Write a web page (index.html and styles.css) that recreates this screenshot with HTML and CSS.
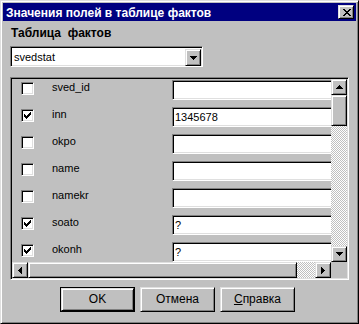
FILE: index.html
```html
<!DOCTYPE html>
<html lang="ru">
<head>
<meta charset="utf-8">
<title>Значения полей в таблице фактов</title>
<link rel="stylesheet" href="styles.css">
</head>
<body>
<div class="window">
  <div class="titlebar">
    <span class="title">Значения полей в таблице фактов</span>
    <span class="close raised">
      <svg width="8" height="7" viewBox="0 0 8 7" shape-rendering="crispEdges"><path d="M0 0h2v1h-2zM6 0h2v1h-2zM1 1h2v1h-2zM5 1h2v1h-2zM2 2h4v1h-4zM3 3h2v1h-2zM2 4h4v1h-4zM1 5h2v1h-2zM5 5h2v1h-2zM0 6h2v1h-2zM6 6h2v1h-2z" fill="#000"/></svg>
    </span>
  </div>
  <div class="content">
    <div class="group-label">Таблица&nbsp; фактов</div>
    <div class="combo sunken">
      <span class="combo-text">svedstat</span>
      <span class="combo-btn raised">
        <svg width="7" height="4" viewBox="0 0 7 4" shape-rendering="crispEdges"><path d="M0 0h7v1h-7zM1 1h5v1h-5zM2 2h3v1h-3zM3 3h1v1h-1z" fill="#000"/></svg>
      </span>
    </div>
    <div class="list sunken">
      <div class="rows">
        <div class="row">
          <span class="check sunken"></span>
          <span class="field-name">sved_id</span>
          <span class="field sunken"></span>
        </div>
        <div class="row">
          <span class="check sunken"><svg width="7" height="7" viewBox="0 0 7 7" shape-rendering="crispEdges"><path d="M6 0h1v1h-1zM5 1h2v1h-2zM0 2h1v1h-1zM4 2h3v1h-3zM0 3h2v1h-2zM3 3h3v1h-3zM0 4h5v1h-5zM1 5h3v1h-3zM2 6h1v1h-1z" fill="#000"/></svg></span>
          <span class="field-name">inn</span>
          <span class="field sunken">1345678</span>
        </div>
        <div class="row">
          <span class="check sunken"></span>
          <span class="field-name">okpo</span>
          <span class="field sunken"></span>
        </div>
        <div class="row">
          <span class="check sunken"></span>
          <span class="field-name">name</span>
          <span class="field sunken"></span>
        </div>
        <div class="row">
          <span class="check sunken"></span>
          <span class="field-name">namekr</span>
          <span class="field sunken"></span>
        </div>
        <div class="row">
          <span class="check sunken"><svg width="7" height="7" viewBox="0 0 7 7" shape-rendering="crispEdges"><path d="M6 0h1v1h-1zM5 1h2v1h-2zM0 2h1v1h-1zM4 2h3v1h-3zM0 3h2v1h-2zM3 3h3v1h-3zM0 4h5v1h-5zM1 5h3v1h-3zM2 6h1v1h-1z" fill="#000"/></svg></span>
          <span class="field-name">soato</span>
          <span class="field sunken">?</span>
        </div>
        <div class="row">
          <span class="check sunken"><svg width="7" height="7" viewBox="0 0 7 7" shape-rendering="crispEdges"><path d="M6 0h1v1h-1zM5 1h2v1h-2zM0 2h1v1h-1zM4 2h3v1h-3zM0 3h2v1h-2zM3 3h3v1h-3zM0 4h5v1h-5zM1 5h3v1h-3zM2 6h1v1h-1z" fill="#000"/></svg></span>
          <span class="field-name">okonh</span>
          <span class="field sunken">?</span>
        </div>
      </div>
      <div class="vscroll">
        <span class="sbtn raised"><svg width="7" height="4" viewBox="0 0 7 4" shape-rendering="crispEdges"><path d="M3 0h1v1h-1zM2 1h3v1h-3zM1 2h5v1h-5zM0 3h7v1h-7z" fill="#000"/></svg></span>
        <span class="vthumb raised"></span>
        <span class="track"></span>
        <span class="sbtn raised"><svg width="7" height="4" viewBox="0 0 7 4" shape-rendering="crispEdges"><path d="M0 0h7v1h-7zM1 1h5v1h-5zM2 2h3v1h-3zM3 3h1v1h-1z" fill="#000"/></svg></span>
      </div>
      <div class="hscroll">
        <span class="sbtn raised"><svg width="4" height="7" viewBox="0 0 4 7" shape-rendering="crispEdges"><path d="M0 3h1v1h-1zM1 2h1v3h-1zM2 1h1v5h-1zM3 0h1v7h-1z" fill="#000"/></svg></span>
        <span class="hthumb raised"></span>
        <span class="track"></span>
        <span class="sbtn raised"><svg width="4" height="7" viewBox="0 0 4 7" shape-rendering="crispEdges"><path d="M0 0h1v7h-1zM1 1h1v5h-1zM2 2h1v3h-1zM3 3h1v1h-1z" fill="#000"/></svg></span>
      </div>
      <div class="corner"></div>
    </div>
    <div class="buttons">
      <span class="btn default"><span class="btn-face raised">OK</span></span>
      <span class="btn"><span class="btn-face raised">Отмена</span></span>
      <span class="btn"><span class="btn-face raised"><u>С</u>правка</span></span>
    </div>
  </div>
</div>
</body>
</html>
```

FILE: styles.css
```css
html, body {
  margin: 0;
  padding: 0;
  background: #c0c0c0;
}

body {
  font-family: "Liberation Sans", Arial, sans-serif;
  font-size: 11px;
  color: #000;
}

.raised {
  box-sizing: border-box;
  background: #c0c0c0;
  border-style: solid;
  border-width: 1px;
  border-color: #dfdfdf #000 #000 #dfdfdf;
  box-shadow: inset 1px 1px 0 #fff, inset -1px -1px 0 #808080;
}

.sunken {
  box-sizing: border-box;
  border-style: solid;
  border-width: 1px;
  border-color: #808080 #fff #fff #808080;
  box-shadow: inset 1px 1px 0 #000, inset -1px -1px 0 #dfdfdf;
}

.window {
  box-sizing: border-box;
  width: 359px;
  height: 324px;
  padding: 1px;
  border-style: solid;
  border-width: 1px;
  border-color: #dfdfdf #000 #000 #dfdfdf;
  box-shadow: inset 1px 1px 0 #fff, inset -1px -1px 0 #808080;
  display: flex;
  flex-direction: column;
  background: #c0c0c0;
}

.titlebar {
  height: 18px;
  margin: 1px 1px 0 1px;
  background: #000080;
  display: flex;
  align-items: center;
  justify-content: space-between;
  padding: 0 2px 0 3px;
}

.title {
  color: #fff;
  font-weight: bold;
  font-size: 12px;
  line-height: 14px;
  padding-top: 1px;
}

.close {
  width: 16px;
  height: 14px;
  display: flex;
  align-items: center;
  justify-content: center;
  padding-left: 1px;
}

.content {
  padding: 0 8px;
  display: flex;
  flex-direction: column;
}

.group-label {
  margin-top: 5px;
  padding-left: 1px;
  font-weight: bold;
  font-size: 12px;
  line-height: 14px;
  white-space: pre;
}

.combo {
  margin-top: 6px;
  width: 193px;
  height: 21px;
  background: #fff;
  padding: 1px;
  display: flex;
  align-items: stretch;
  justify-content: space-between;
}

.combo-text {
  padding: 2px 0 0 2px;
  line-height: 14px;
}

.combo-btn {
  width: 16px;
  height: 17px;
  margin: 1px 0 0;
  display: flex;
  align-items: center;
  justify-content: center;
  padding-top: 1px;
}

.list {
  margin-top: 10px;
  width: 339px;
  height: 203px;
  padding: 1px;
  display: grid;
  grid-template-columns: 319px 16px;
  grid-template-rows: 183px 16px;
  background: #c0c0c0;
}

.rows {
  overflow: hidden;
  padding-top: 1px;
  display: flex;
  flex-direction: column;
  gap: 7px;
}

.row {
  display: grid;
  grid-template-columns: 13px 120px 200px;
  column-gap: 18px;
  padding-left: 9px;
  height: 20px;
  align-items: start;
  column-gap: 0;
}

.check {
  width: 13px;
  height: 13px;
  margin-top: 2px;
  background: #fff;
  display: flex;
  align-items: center;
  justify-content: center;
}

.field-name {
  padding: 1px 0 0 18px;
  line-height: 13px;
  width: 120px;
  box-sizing: border-box;
  margin-left: 0;
}

.row .field-name {
  width: 138px;
}

.row {
  grid-template-columns: 13px 138px 200px;
}

.field {
  width: 200px;
  height: 20px;
  background: #fff;
  padding: 2px 0 0 2px;
  line-height: 15px;
}

.vscroll {
  display: flex;
  flex-direction: column;
}

.hscroll {
  display: flex;
  flex-direction: row;
}

.sbtn {
  width: 16px;
  height: 16px;
  flex: none;
  display: flex;
  align-items: center;
  justify-content: center;
}

.vthumb {
  height: 31px;
  flex: none;
}

.hthumb {
  width: 269px;
  flex: none;
}

.track {
  flex: 1;
  background-color: #fff;
  background-image: conic-gradient(#c0c0c0 25%, #fff 0 50%, #c0c0c0 0 75%, #fff 0);
  background-size: 2px 2px;
}

.corner {
  background: #c0c0c0;
}

.buttons {
  margin-top: 7px;
  padding-left: 50px;
  display: flex;
  gap: 5px;
}

.btn {
  width: 75px;
  height: 25px;
  box-sizing: border-box;
  display: flex;
}

.btn.default {
  border: 1px solid #000;
}

.btn-face {
  flex: 1;
  display: flex;
  align-items: center;
  justify-content: center;
  padding-bottom: 1px;
  font-size: 12px;
}

.btn-face u {
  text-decoration: underline;
}
```
